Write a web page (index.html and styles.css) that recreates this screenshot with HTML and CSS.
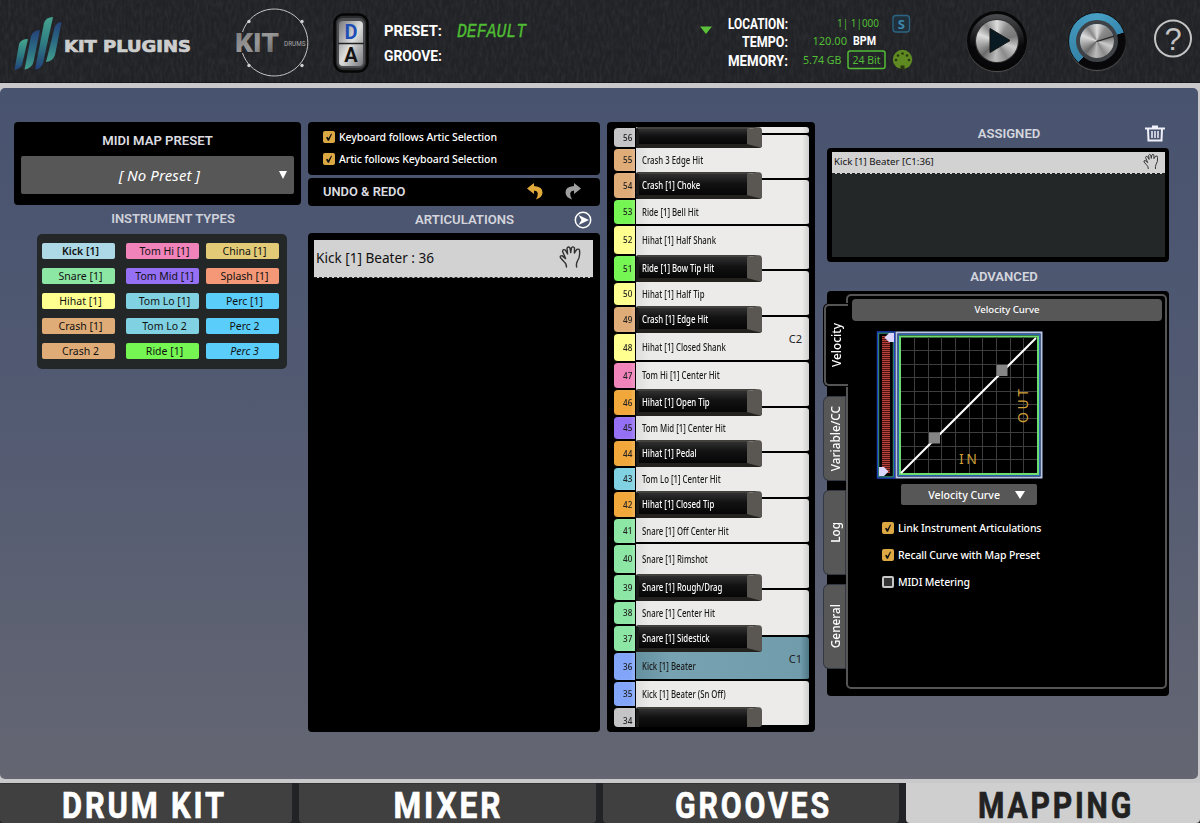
FILE: index.html
```
<!DOCTYPE html>
<html lang="en">
<head>
    <meta charset="UTF-8">
    <title>Kit Plugins - Mapping</title>
    <link rel="stylesheet" href="styles.css">
</head>
<body>

<svg width="0" height="0" class="defs">
    <defs>
        <linearGradient id="bar" x1="0" y1="0" x2="0" y2="1"><stop offset="0" stop-color="#45a48f"/><stop offset=".5" stop-color="#2f7c83"/><stop offset="1" stop-color="#22407a"/></linearGradient>
        <linearGradient id="bar2" x1="0" y1="0" x2="0" y2="1"><stop offset="0" stop-color="#25427a"/><stop offset=".5" stop-color="#2b6c83"/><stop offset="1" stop-color="#43a08d"/></linearGradient>
        <linearGradient id="steel" x1="0" y1="0" x2="1" y2="1"><stop offset="0" stop-color="#77797c"/><stop offset=".5" stop-color="#dedede"/><stop offset="1" stop-color="#77797c"/></linearGradient>
        <linearGradient id="kit" x1="0" y1="0" x2="1" y2="1"><stop offset="0" stop-color="#777"/><stop offset=".5" stop-color="#9a9a9a"/><stop offset="1" stop-color="#555"/></linearGradient>
        <filter id="leather" x="0" y="0" width="100%" height="100%">
            <feTurbulence type="fractalNoise" baseFrequency=".35 .12" numOctaves="3" seed="4"/>
            <feColorMatrix values="0 0 0 0 .55  0 0 0 0 .57  0 0 0 0 .6  .9 0 0 0 -.3"/>
        </filter>
        <symbol id="hand" viewBox="0 0 24 24">
            <path d="M7.5 22Q7.5 18.5 4.8 16.5L1.5 12.8Q.6 10.6 3 10.6L6.6 13.6L3.6 6.4Q4 3.6 6.4 5.2L8.6 9L8 3.2Q9.2 .8 11 3L11.7 7.6L12.5 2.8Q14 .8 15.5 3L15.4 8L17.8 4.4Q20.8 3.4 20.6 6.4Q21 12.6 18.4 16.2Q17 18.6 17.6 22" fill="none" stroke="#333" stroke-width="1.4" stroke-linejoin="round" stroke-linecap="round"/>
        </symbol>
        <symbol id="check" viewBox="0 0 12 12">
            <path d="M3 6.4L4.6 5.8L5.4 7.2L8.2 2.6L9 3L6 9.8H4.8Z" fill="#111"/>
        </symbol>
    </defs>
</svg>

<header class="topbar">
    <svg class="texture" width="1200" height="83"><rect width="1200" height="83" filter="url(#leather)"/></svg>

    <svg class="logo" width="200" height="83" viewBox="0 0 200 83">
        <path d="M19 44Q21 39 28 39L22 65Q20.500 69 14.500 70Z" fill="url(#bar)"/>
        <path d="M31 36Q33 30.500 40 30L33.500 62Q31.500 68.500 24.500 69.500Z" fill="url(#bar2)"/>
        <path d="M44 23Q46 17 53 17L43 63Q41 69 35 69.500Z" fill="url(#bar)"/>
        <path d="M54.500 28Q56 22.500 61.500 22L55 55Q53 61 46 62Z" fill="url(#bar2)"/>
        <text x="64" y="51.500" class="brand" textLength="127" lengthAdjust="spacingAndGlyphs">KIT PLUGINS</text>
    </svg>

    <svg class="product" width="90" height="83" viewBox="225 0 90 83">
        <path d="M241.500 32A33.500 33.500 0 1 1 241.500 53" fill="none" stroke="#c4c4c4"/>
        <g fill="#d0d0d0"><circle cx="248" cy="21.500" r="1.700"/><circle cx="301" cy="21.500" r="1.700"/><circle cx="248" cy="65.500" r="1.700"/><circle cx="301" cy="65.500" r="1.700"/></g>
        <text x="234" y="52" class="kit" fill="url(#kit)" textLength="44" lengthAdjust="spacingAndGlyphs">KIT</text>
        <text x="283" y="45.500" class="drums" textLength="21.500" lengthAdjust="spacingAndGlyphs">DRUMS</text>
    </svg>

    <svg class="switch" width="42" height="83" viewBox="330 0 42 83">
        <rect x="334.500" y="14.500" width="33" height="57" rx="9" fill="#2a2b2d" stroke="#060606" stroke-width="2.500"/>
        <rect x="337" y="18" width="28" height="50" rx="6" fill="#4b4d50"/>
        <rect x="339" y="21" width="24" height="45" rx="4" fill="url(#steel)"/>
        <path d="M338 43.500H364" stroke="#222" stroke-width="1.500"/>
        <text x="351" y="39" text-anchor="middle" class="sw" fill="#1f4fb5">D</text>
        <text x="351" y="61.500" text-anchor="middle" class="sw" fill="#141414">A</text>
    </svg>

    <svg class="readout" width="540" height="83" viewBox="380 0 540 83">
        <g class="lbl">
            <text x="384" y="36" textLength="58" lengthAdjust="spacingAndGlyphs">PRESET:</text>
            <text x="384" y="61" textLength="58" lengthAdjust="spacingAndGlyphs">GROOVE:</text>
            <text x="728" y="28.500" textLength="60" lengthAdjust="spacingAndGlyphs">LOCATION:</text>
            <text x="742" y="47" textLength="46" lengthAdjust="spacingAndGlyphs">TEMPO:</text>
            <text x="728" y="65.500" textLength="60" lengthAdjust="spacingAndGlyphs">MEMORY:</text>
        </g>
        <text x="457" y="37" class="lcd" textLength="69" lengthAdjust="spacingAndGlyphs">DEFAULT</text>
        <path d="M700 26.500H712L706 34Z" fill="#5cc03a"/>
        <g class="val">
            <text x="837" y="26.500" textLength="42" lengthAdjust="spacingAndGlyphs">1| 1|000</text>
            <text x="812.500" y="45" textLength="34.500" lengthAdjust="spacingAndGlyphs">120.00</text>
            <text x="803" y="64" textLength="38.500" lengthAdjust="spacingAndGlyphs">5.74 GB</text>
            <text x="852.500" y="64" textLength="28" lengthAdjust="spacingAndGlyphs">24 Bit</text>
        </g>
        <text x="853" y="45" class="bpm" textLength="23" lengthAdjust="spacingAndGlyphs">BPM</text>
        <rect x="848" y="51" width="37" height="17.500" rx="2" fill="none" stroke="#52bd35" stroke-width="1.500"/>
        <rect x="893" y="15.500" width="16.500" height="16.500" rx="3" fill="#1f303a" stroke="#2c6583" stroke-width="1.300"/>
        <text x="901.300" y="28.500" text-anchor="middle" class="solo">S</text>
        <circle cx="902.500" cy="59.500" r="9.700" fill="#5f8a22"/>
        <g fill="#293610"><circle cx="896" cy="60" r="1.300"/><circle cx="898" cy="55.500" r="1.300"/><circle cx="902.500" cy="53.500" r="1.300"/><circle cx="907" cy="55.500" r="1.300"/><circle cx="909" cy="60" r="1.300"/><rect x="900.500" y="65.500" width="4" height="4"/></g>
    </svg>

    <div class="play"><div class="metal">
        <svg width="42" height="42"><path d="M14 8.500V32.500L34 20.500Z" fill="#0a1a22" stroke="#111" stroke-linejoin="round"/></svg>
    </div></div>
    <div class="knob"><div class="metal">
        <svg width="34" height="34"><path d="M17 17.500L34 12" stroke="#222" stroke-width="1.300"/></svg>
    </div></div>
    <svg class="help" width="40" height="83" viewBox="1153 0 40 83">
        <circle cx="1173" cy="38.500" r="18" fill="none" stroke="#c4c4c4" stroke-width="2"/>
        <text x="1173" y="50" text-anchor="middle">?</text>
    </svg>
</header>

<main class="workspace">

    <section class="col-types">
        <div class="box preset">
            <h2>MIDI MAP PRESET</h2>
            <div class="select big"><i>[ No Preset ]</i><span class="caret"></span></div>
        </div>
        <h2 class="types-head">INSTRUMENT TYPES</h2>
        <div class="types">
            <span class="chip kick">Kick [1]</span><span class="chip pink">Tom Hi [1]</span><span class="chip gold">China [1]</span>
            <span class="chip green">Snare [1]</span><span class="chip purple">Tom Mid [1]</span><span class="chip coral">Splash [1]</span>
            <span class="chip yellow">Hihat [1]</span><span class="chip aqua">Tom Lo [1]</span><span class="chip sky">Perc [1]</span>
            <span class="chip tan">Crash [1]</span><span class="chip aqua">Tom Lo 2</span><span class="chip sky">Perc 2</span>
            <span class="chip tan">Crash 2</span><span class="chip lime">Ride [1]</span><span class="chip sky"><i>Perc 3</i></span>
        </div>
    </section>

    <section class="col-artic">
        <div class="box follow">
            <label><svg class="cb on"><use href="#check"/></svg>Keyboard follows Artic Selection</label>
            <label><svg class="cb on"><use href="#check"/></svg>Artic follows Keyboard Selection</label>
        </div>
        <div class="box undo">
            <h2>UNDO &amp; REDO</h2>
            <svg width="60" height="18" viewBox="0 0 60 18">
                <path d="M0 5.500L7 0V3Q16 3.500 15.500 10Q15 14.500 9 16.500Q13.500 8 7 7.500V11Z" fill="#e0a93b"/>
                <path d="M54 5.500L47 0V3Q38 3.500 38.500 10Q39 14.500 45 16.500Q40.500 8 47 7.500V11Z" fill="#a0a0a0"/>
            </svg>
        </div>
        <div class="artic-head">
            <h2>ARTICULATIONS</h2>
            <svg width="18" height="18"><circle cx="9" cy="9" r="7.700" fill="none" stroke="#fff" stroke-width="1.500"/><path d="M4.500 4L15 9L4.500 14L7.500 9Z" fill="#fff"/></svg>
        </div>
        <div class="box artic-list">
            <div class="row">Kick [1] Beater : 36<svg class="hand"><use href="#hand"/></svg></div>
        </div>
    </section>

    <section class="box keyboard">
        <div class="whites">
            <div></div><div></div><div></div><div></div><div></div>
            <div>C2</div>
            <div></div><div></div><div></div><div></div><div></div><div></div>
            <div class="hit">C1</div>
            <div></div>
        </div>
        <div class="notes">
            <b class="none"><span>56</span></b><p class="black"></p>
            <b class="tan"><span>55</span></b><p><span>Crash 3 Edge Hit</span></p>
            <b class="tan"><span>54</span></b><p class="black"><span>Crash [1] Choke</span></p>
            <b class="lime"><span>53</span></b><p><span>Ride [1] Bell Hit</span></p>
            <b class="yellow"><span>52</span></b><p><span>Hihat [1] Half Shank</span></p>
            <b class="lime"><span>51</span></b><p class="black"><span>Ride [1] Bow Tip Hit</span></p>
            <b class="yellow"><span>50</span></b><p><span>Hihat [1] Half Tip</span></p>
            <b class="tan"><span>49</span></b><p class="black"><span>Crash [1] Edge Hit</span></p>
            <b class="yellow"><span>48</span></b><p><span>Hihat [1] Closed Shank</span></p>
            <b class="pink"><span>47</span></b><p><span>Tom Hi [1] Center Hit</span></p>
            <b class="orange"><span>46</span></b><p class="black"><span>Hihat [1] Open Tip</span></p>
            <b class="purple"><span>45</span></b><p><span>Tom Mid [1] Center Hit</span></p>
            <b class="orange"><span>44</span></b><p class="black"><span>Hihat [1] Pedal</span></p>
            <b class="aqua"><span>43</span></b><p><span>Tom Lo [1] Center Hit</span></p>
            <b class="orange"><span>42</span></b><p class="black"><span>Hihat [1] Closed Tip</span></p>
            <b class="green"><span>41</span></b><p><span>Snare [1] Off Center Hit</span></p>
            <b class="green"><span>40</span></b><p><span>Snare [1] Rimshot</span></p>
            <b class="green"><span>39</span></b><p class="black"><span>Snare [1] Rough/Drag</span></p>
            <b class="green"><span>38</span></b><p><span>Snare [1] Center Hit</span></p>
            <b class="green"><span>37</span></b><p class="black"><span>Snare [1] Sidestick</span></p>
            <b class="blue"><span>36</span></b><p><span>Kick [1] Beater</span></p>
            <b class="blue"><span>35</span></b><p><span>Kick [1] Beater (Sn Off)</span></p>
            <b class="none last"><span>34</span></b><p class="black last"></p>
        </div>
    </section>

    <section class="col-adv">
        <div class="assigned-head">
            <h2>ASSIGNED</h2>
            <svg width="20" height="17"><path d="M7 1.500H13M0 3.500H20" stroke="#f0f0fa" stroke-width="1.800"/><path d="M3 4L3.500 15.500H16.500L17 4" fill="none" stroke="#f0f0fa" stroke-width="2"/><path d="M7 6V13M10 6V13M13 6V13" stroke="#f0f0fa" stroke-width="1.500"/></svg>
        </div>
        <div class="box assigned">
            <div class="row">Kick [1] Beater [C1:36]<svg class="hand"><use href="#hand"/></svg></div>
        </div>
        <h2 class="adv-head">ADVANCED</h2>
        <div class="box advanced">
            <nav class="vtabs">
                <a class="active"><span>Velocity</span></a>
                <a><span>Variable/CC</span></a>
                <a><span>Log</span></a>
                <a><span>General</span></a>
            </nav>
            <div class="pane">
                <div class="pane-title">Velocity Curve</div>
                <svg class="curve" width="167" height="148" viewBox="876 331 167 148">
                    <defs>
                        <pattern id="ticks" width="9" height="2" patternUnits="userSpaceOnUse"><rect width="9" height="2" fill="#4a1512"/><rect width="9" height="1" fill="#b8403a"/></pattern>
                    </defs>
                    <rect x="877.500" y="332" width="17" height="146" fill="#000" stroke="#1d3fbf" stroke-width="1.500"/>
                    <rect x="878.700" y="333.200" width="14.600" height="143.600" fill="none" stroke="#3c9c7d" stroke-width="1"/>
                    <rect x="882" y="336" width="8" height="137" fill="url(#ticks)"/>
                    <path d="M894 333V342H889L884.500 337.500L889 333ZM879 467H884L888.500 471.500L884 476H879Z" fill="#dcd6ff"/>
                    <rect x="896.500" y="332.500" width="145" height="145" fill="#000" stroke="#b7c6e8" stroke-width="2"/>
                    <rect x="898.500" y="334.500" width="141" height="141" fill="none" stroke="#2a62b0" stroke-width="1.500"/>
                    <rect x="900" y="336.500" width="138" height="137.500" fill="none" stroke="#6fdc70" stroke-width="2"/>
                    <path d="M914.500 337V473M928.500 337V473M941.500 337V473M955.500 337V473M969.500 337V473M982.500 337V473M996.500 337V473M1010.500 337V473M1023.500 337V473M901 350.500H1037M901 364.500H1037M901 377.500H1037M901 391.500H1037M901 404.500H1037M901 418.500H1037M901 432.500H1037M901 446.500H1037M901 459.500H1037" stroke="#3d3d3d"/>
                    <path d="M901 473L1036 338" stroke="#fff" stroke-width="2"/>
                    <path d="M929 432.500h11v11h-11zM996.500 365h11v11h-11z" fill="#858585"/>
                    <text x="959" y="464" class="axis" textLength="18">IN</text>
                    <text transform="translate(1028 423) rotate(-90)" class="axis" textLength="34">OUT</text>
                </svg>
                <div class="select small">Velocity Curve<span class="caret"></span></div>
                <div class="opts">
                    <label><svg class="cb on"><use href="#check"/></svg>Link Instrument Articulations</label>
                    <label><svg class="cb on"><use href="#check"/></svg>Recall Curve with Map Preset</label>
                    <label><svg class="cb"></svg>MIDI Metering</label>
                </div>
            </div>
        </div>
    </section>
</main>

<footer class="tabs">
    <a><svg width="292" height="40"><text x="62" y="35" textLength="165" lengthAdjust="spacingAndGlyphs">DRUM KIT</text></svg></a>
    <a><svg width="297" height="40"><text x="94.500" y="35" textLength="110" lengthAdjust="spacingAndGlyphs">MIXER</text></svg></a>
    <a><svg width="296" height="40"><text x="72" y="35" textLength="157" lengthAdjust="spacingAndGlyphs">GROOVES</text></svg></a>
    <a class="active"><svg width="294" height="40"><text x="72" y="35" textLength="156" lengthAdjust="spacingAndGlyphs">MAPPING</text></svg></a>
</footer>

</body>
</html>
```
FILE: styles.css
```
* {
    box-sizing: border-box;
}
body {
    margin: 0;
    width: 1200px;
    height: 823px;
    overflow: hidden;
    background: #c9c9cb;
    font-family: "Noto Sans", "Open Sans", sans-serif;
    font-size: 10.5px;
    color: #fff;
}
svg {
    display: block;
    flex: none;
}
.defs {
    position: absolute;
}
h2 {
    margin: 0;
    font: 600 13.1px/16px Roboto, sans-serif;
    color: #dcdce0;
    text-align: center;
    white-space: nowrap;
}

/* top bar */
.topbar {
    position: relative;
    display: flex;
    align-items: center;
    height: 83px;
    background: #212226;
    border-bottom: 1px solid #151517;
}
.topbar > * {
    position: relative;
}
.topbar .texture {
    position: absolute;
    left: 0;
    top: 0;
    opacity: .14;
}
.brand {
    font: bold 15.5px "DejaVu Sans", sans-serif;
    fill: #cdcdcd;
    stroke: #cdcdcd;
    stroke-width: .7px;
}
.product { margin-left: 26px; }
.kit {
    font: 900 26px Roboto, sans-serif;
}
.drums {
    font: 7.5px Roboto, sans-serif;
    fill: #a5a5a5;
}
.switch { margin-left: 14px; }
.sw {
    font: bold 20px "Liberation Sans Narrow", Roboto, sans-serif;
}
.readout { margin-left: 8px; }
.lbl {
    font: bold 15.5px Roboto, sans-serif;
    fill: #fff;
}
.lcd {
    font: italic 19.5px "Liberation Mono", monospace;
    fill: #4fbd33;
    stroke: #4fbd33;
    stroke-width: .4px;
}
.val {
    font: 10.5px "Noto Sans", sans-serif;
    fill: #52bd35;
}
.bpm {
    font: bold 13px Roboto, sans-serif;
    fill: #fff;
}
.solo {
    font: bold 13px "Noto Sans", sans-serif;
    fill: #3e87ad;
}
.play, .knob {
    display: grid;
    place-items: center;
    width: 60px;
    height: 60px;
    margin-left: 47px;
    border-radius: 50%;
    background: linear-gradient(#4c4d50, #08080a 60%);
    border: 3px solid #070708;
    box-shadow: 0 1px 1px #555;
}
.metal {
    border-radius: 50%;
    background: conic-gradient(#ddd, #8c8c8c 35deg, #777 75deg, #ccc 110deg, #8a8a8a 150deg, #bbb 185deg, #6a6a6a 225deg, #ddd 290deg, #888 325deg, #ddd);
    box-shadow: 0 0 0 1px #333;
}
.knob {
    width: 58px;
    height: 58px;
    margin-left: 41px;
    border: 1px solid #111;
    background: conic-gradient(from 221deg, #3583a8 0, #489fc4 140deg, #3687ad 211deg, #08080a 212deg);
}
.knob .metal {
    box-shadow: 0 0 0 4px #3e4145;
}
.help { margin-left: 27px; }
.help text {
    font: 31px "Liberation Sans", sans-serif;
    fill: #c4c4c4;
}

/* workspace */
.workspace {
    display: flex;
    width: 1198px;
    height: 691px;
    margin-top: 5px;
    padding: 34px 0 0 14px;
    border-radius: 5px;
    background: linear-gradient(#48536f, #525a72 45%, #646672);
}
.box {
    background: #000;
    border-radius: 4px;
}
.col-types { width: 287px; }
.preset {
    height: 83px;
    padding: 11px 7px 0;
}
.select {
    display: flex;
    align-items: center;
    justify-content: flex-end;
    background: #575757;
    border-radius: 2px;
}
.select.big {
    height: 38px;
    margin-top: 7px;
    padding-right: 7px;
    font-size: 15px;
}
.select.big i {
    margin-right: 79px;
    letter-spacing: .1px;
}
.caret {
    border: 4.5px solid transparent;
    border-top: 8px solid #fff;
    border-bottom: 0;
}
.types-head {
    margin: 6px 0 7px;
    padding-left: 31px;
    font-size: 13px;
    color: #cfd1da;
}
.types {
    display: grid;
    grid-template-columns: 77px 73px 73px;
    grid-auto-rows: 16px;
    column-gap: 7px;
    row-gap: 9px;
    width: 250px;
    height: 135px;
    margin-left: 23px;
    padding: 9px 5px;
    background: #232728;
    border-radius: 5px;
}
.chip {
    width: 73px;
    font-size: 10.5px;
    line-height: 16px;
    padding-left: 4px;
    color: #111;
    text-align: center;
    white-space: nowrap;
    border-radius: 2px;
}
.chip.kick {
    background: #add8e6;
    font-weight: 600;
}
.pink { background: #f083ba; }
.gold { background: #e2ca76; }
.green { background: #8ce6a4; }
.purple { background: #9670f4; }
.coral { background: #f49877; }
.yellow { background: #ffff8f; }
.aqua { background: #80d2e2; }
.sky { background: #5acdfa; }
.tan { background: #dfac78; }
.lime { background: #75f653; }
.orange { background: #f1a73a; }
.blue { background: #82a5fa; }
.none { background: #c4c4c6; }

.col-artic {
    width: 292px;
    margin-left: 7px;
}
.follow {
    height: 53px;
    padding: 9px 15px;
}
label {
    display: flex;
    align-items: center;
    height: 12px;
    font-weight: 500;
    letter-spacing: -.08px;
    white-space: nowrap;
}
.follow label { margin-bottom: 10px; }
.cb {
    width: 12px;
    height: 12px;
    margin-right: 4px;
    border-radius: 2px;
    border: 2px solid #c6c6c6;
    background: #333;
}
.cb.on {
    border: 0;
    background: #dca844;
}
.undo {
    display: flex;
    justify-content: space-between;
    align-items: center;
    height: 28px;
    margin-top: 3px;
    padding: 0 13px 0 15px;
}
.undo h2 { font-size: 12.9px; }
.artic-head {
    display: grid;
    grid-template-columns: 1fr 18px;
    align-items: center;
    height: 27px;
    padding-right: 8px;
}
.artic-head h2 {
    padding-left: 47px;
    color: #d3d4dc;
}
.artic-list {
    height: 499px;
    padding: 7px 7px 7px 6px;
}
.row {
    display: flex;
    align-items: center;
    justify-content: space-between;
    background: #d2d2d2;
    border-bottom: 1px dashed #222;
    color: #111;
}
.artic-list .row {
    height: 38px;
    padding: 0 10px 3px 2px;
    font-size: 13.6px;
}
.hand {
    width: 24px;
    height: 24px;
}

/* keyboard */
.keyboard {
    display: grid;
    width: 208px;
    height: 610px;
    margin-left: 7px;
    padding: 5px 6px 5px 7px;
}
.whites, .notes {
    grid-area: 1 / 1;
    display: grid;
}
.whites {
    margin-left: 22px;
    grid-template-rows: 8px 45px 46px 45px 46px 45px 46px 45px 46px 45px 46px 47px 44px 46px;
}
.whites div {
    display: flex;
    align-items: center;
    justify-content: flex-end;
    padding-right: 7px;
    background: linear-gradient(90deg, #dedede, #ebebea 8%, #ecebea 96%, #cfcfcf);
    border-bottom: 2px solid #000;
    border-radius: 0 3px 3px 0;
    color: #222;
    font-size: 11px;
}
.whites .hit {
    background: linear-gradient(90deg, #65909f, #76a2b2 20%, #719cab 95%, #4f7886);
}
.notes {
    grid-template-columns: 21px 126px;
    column-gap: 1px;
    grid-template-rows: 21px 24px 27px 26px 30px 27px 24px 27px 29px 27px 27px 24px 27px 24px 27px 26px 30px 27px 24px 27px 29px 26px 20px;
}
.notes b {
    display: flex;
    align-items: center;
    justify-content: flex-end;
    border: solid #000;
    border-width: 1px 0;
    border-radius: 4px 0 0 4px;
    padding: 0 3px 1px 0;
    color: #222;
    font-size: 9px;
    font-weight: 500;
    box-shadow: inset -3px 0 3px rgba(255, 255, 255, .15);
}
.notes b span {
    transform: scaleX(.9);
    transform-origin: right;
}
.notes p {
    display: flex;
    align-items: center;
    margin: 0;
    padding: 0 0 1px 6px;
    color: #1a1a1a;
    font-size: 10px;
    font-weight: 500;
    white-space: nowrap;
}
.notes p span {
    transform: scaleX(.78);
    transform-origin: left;
}
.notes .black {
    padding: 0 0 0 3px;
    color: #fff;
    background: linear-gradient(#303030, #121212 45%, #060606);
    border: solid;
    border-width: 2px 15px 4px 3px;
    border-color: #42413e #5a5752 #24221f #1c1c1c;
    border-radius: 2px 4px 3px 0;
}
.notes b.last {
    padding-top: 6px;
    border-bottom: 0;
}
.notes .black.last {
    border-bottom: 0;
}

/* assigned and advanced */
.col-adv {
    width: 342px;
    margin-left: 12px;
}
.assigned-head {
    display: grid;
    grid-template-columns: 1fr 20px;
    height: 26px;
    padding: 3px 4px 0 0;
}
.assigned-head h2 {
    padding-left: 46px;
    line-height: 18px;
    color: #d5d6de;
}
.assigned {
    height: 114px;
    border: solid #000;
    border-width: 4px 4px 5px 5px;
    background: #232728;
}
.assigned .row {
    height: 22px;
    padding: 0 5px 3px 2px;
    font-size: 9.7px;
}
.assigned .hand {
    width: 17px;
    height: 17px;
}
.adv-head {
    height: 29px;
    padding: 7px 0 0 12px;
    color: #d5d6de;
}
.advanced {
    display: flex;
    height: 405px;
    padding: 3px 2px 7px 0;
}
.vtabs {
    display: flex;
    flex-direction: column;
    gap: 11px;
    width: 24px;
    margin-left: -3px;
    padding-top: 10px;
    z-index: 1;
}
.vtabs a {
    display: flex;
    align-items: center;
    justify-content: center;
    width: 21px;
    height: 83px;
    background: #575757;
    border-radius: 5px 0 0 5px;
    box-shadow: 0 0 0 1px #333843;
    font-size: 11.8px;
    font-weight: 500;
}
.vtabs span {
    writing-mode: vertical-rl;
    transform: rotate(180deg);
    white-space: nowrap;
}
.vtabs .active {
    width: 24px;
    height: 82px;
    padding-right: 3px;
    background: #000;
    border: 2px solid #555;
    border-right: 0;
    box-shadow: 0 0 0 1px #000;
    clip-path: inset(-1px 0 -1px -1px);
}
.pane {
    flex: 1;
    margin-left: -2px;
    padding: 3px 3px 0 4px;
    border: 2px solid #555;
    border-radius: 5px;
}
.pane-title {
    height: 22px;
    line-height: 22px;
    background: #575757;
    border-radius: 4px;
    text-align: center;
    font-weight: 500;
    font-size: 9.6px;
}
.curve { margin: 10px 0 0 24px; }
.axis {
    font: 14px "Noto Sans", sans-serif;
    fill: #cf9f36;
}
.select.small {
    width: 136px;
    height: 21px;
    margin: 5px 0 0 49px;
    padding-right: 12px;
    gap: 15px;
    font-size: 10.6px;
    font-weight: 500;
}
.small .caret {
    border-width: 8px 5.5px 0;
}
.opts { padding: 17px 0 0 30px; }
.opts label {
    margin-bottom: 15px;
    letter-spacing: -.13px;
}

/* bottom tabs */
.tabs {
    display: flex;
    gap: 7px;
    height: 40px;
    margin-top: 4px;
    background: #222327;
}
.tabs a {
    background: #404040;
    border-radius: 0 0 4px 4px;
    box-shadow: inset 0 1px #333;
}
.tabs svg {
    overflow: visible;
}
.tabs text {
    font: bold 37.5px "Liberation Sans Narrow", Roboto, sans-serif;
    letter-spacing: 3.5px;
    fill: #fff;
    stroke: #fff;
    stroke-width: .7px;
}
.tabs .active {
    background: #cfcfcf;
    box-shadow: none;
}
.tabs .active text {
    fill: #222;
    stroke: #222;
}
```
